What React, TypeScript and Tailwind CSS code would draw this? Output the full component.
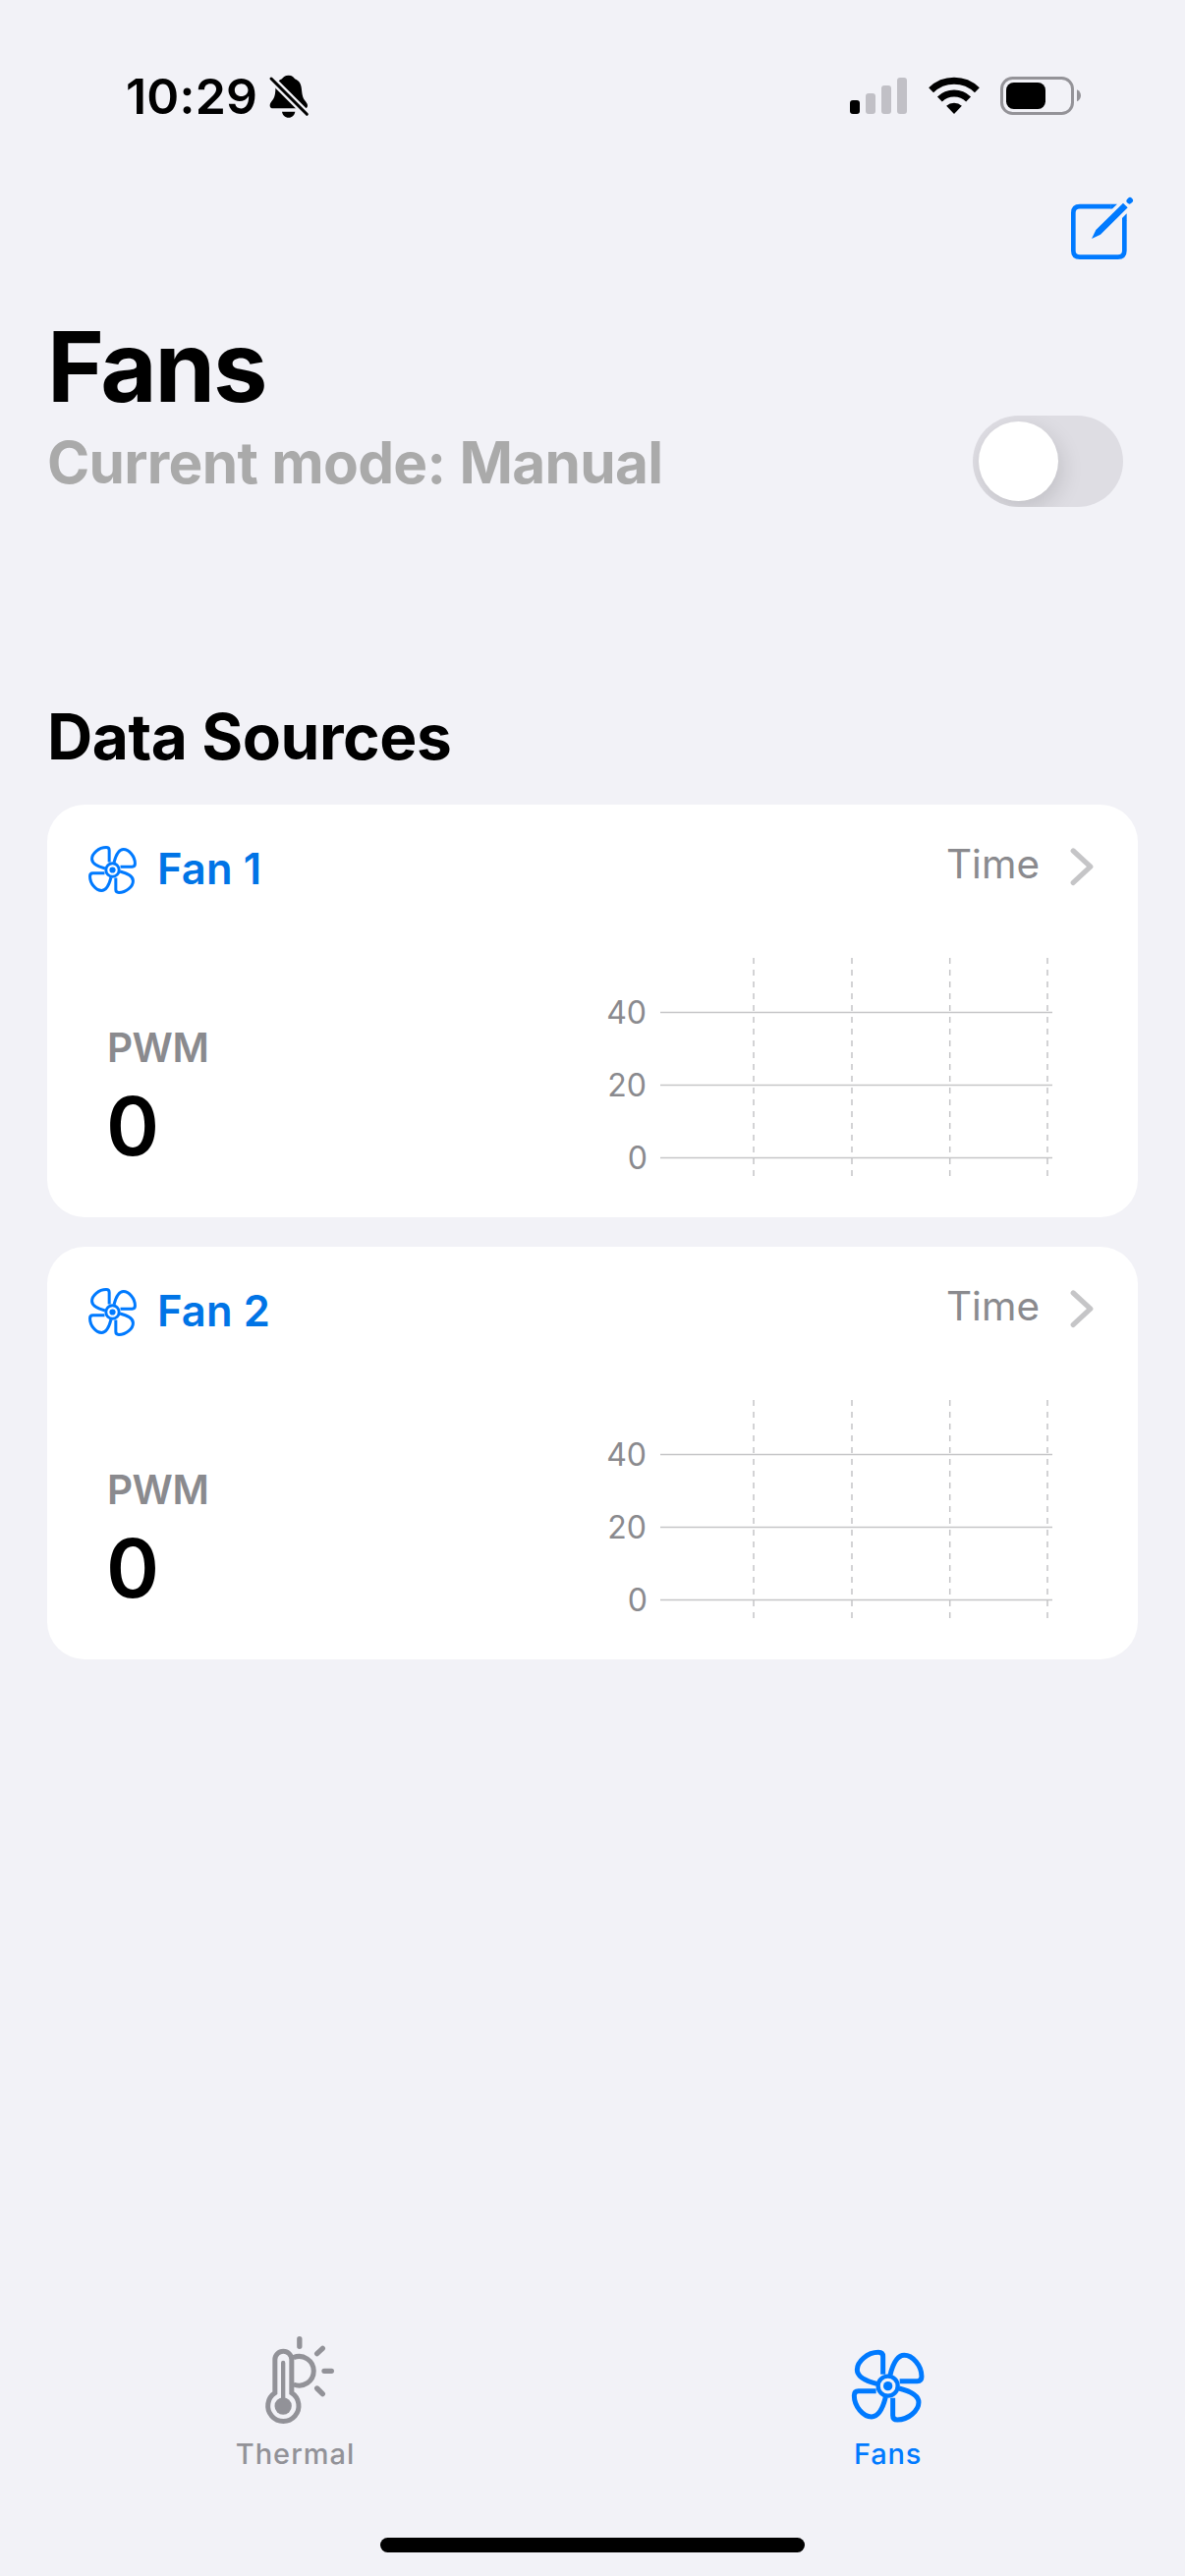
const BLADE = "M176 142V88Q176 75 162 75C128 75 97 103 97 128C97 150 125 163 157 171";

function FanIcon({ className, stroke }: { className: string; stroke: number }) {
  return (
    <svg viewBox="81 68 220 220" className={`overflow-visible ${className}`} fill="none" stroke="currentColor">
      {[0, 90, 180, 270].map((angle) => (
        <path key={angle} d={BLADE} strokeWidth={stroke} transform={`rotate(${angle} 191 178)`} />
      ))}
      <circle cx="191" cy="178" r="30" strokeWidth="13" />
      <circle cx="191" cy="178" r="14" fill="currentColor" stroke="none" />
    </svg>
  );
}

function BellSlashIcon() {
  return (
    <svg viewBox="490 46 126 136" className="h-[45.3px] w-[42px] overflow-visible">
      <path
        d="M552 51C541 51 534 57 532 62C518 68 512 80 512 95C511 115 508 121 500 131C496 136 495 140 495 144C495 149 499 152 505 152H600C606 152 610 149 610 144C610 140 608 136 604 131C596 121 594 115 592 95C591 78 585 68 571 62C569 57 563 51 552 51Z"
        fill="#000"
      />
      <path d="M532 162H572C570 173 563 180 552 180C541 180 534 173 532 162Z" fill="#000" />
      <path d="M490 52L618 180" stroke="#f2f2f7" strokeWidth="23" />
      <path d="M499 61L608 170" stroke="#000" strokeWidth="9" strokeLinecap="round" />
    </svg>
  );
}

function SignalIcon() {
  return (
    <svg viewBox="0 0 174 111" className="h-[37px] w-[58px]" fill="#c1c0c6">
      <rect x="0" y="69" width="30" height="42" rx="9" fill="#000" />
      <rect x="48" y="48" width="30" height="63" rx="9" />
      <rect x="96" y="24" width="30" height="87" rx="9" />
      <rect x="144" y="0" width="30" height="111" rx="9" />
    </svg>
  );
}

function WifiIcon() {
  return (
    <svg viewBox="286 57 150 111" className="h-[37px] w-[50px] overflow-visible" fill="none" stroke="#000" strokeWidth="21">
      <path d="M290.8 95.4A101 101 0 0 1 431.2 95.4" />
      <path d="M317.2 122.7A63 63 0 0 1 404.8 122.7" />
      <path d="M361 168L337.4 143.6A34.5 34.5 0 0 1 384.6 143.6Z" fill="#000" stroke="none" />
    </svg>
  );
}

function BatteryIcon() {
  return (
    <svg viewBox="504 54 246 117" className="h-[39px] w-[82px]">
      <rect x="508.500" y="58.500" width="216" height="108" rx="33" fill="none" stroke="#949398" strokeWidth="9" />
      <rect x="522" y="72" width="120" height="81" rx="23" fill="#000" />
      <path d="M738 94C746 97 750 105 750 112C750 119 746 127 738 130Z" fill="#949398" />
    </svg>
  );
}

function ComposeIcon() {
  return (
    <svg viewBox="90 63 189 189" className="size-[63px] overflow-visible" fill="none" stroke="#007aff">
      <path d="M212 90.500H117Q97 90.500 97 110V226Q97 245 117 245H233Q253 245 253 226V134" strokeWidth="14" />
      <path d="M211 83.500H231L216 97.500H211ZM260 112V135H246V126Z" fill="#007aff" stroke="none" />
      <path d="M249 80L263 94L180 176L153 189L166 162Z" fill="#007aff" stroke="none" />
      <path d="M268.500 73.500L270 72" strokeWidth="18" strokeLinecap="round" />
    </svg>
  );
}

function ThermalIcon() {
  return (
    <svg viewBox="150 84 210 267" className="h-[89px] w-[70px] overflow-visible" fill="none" stroke="currentColor" strokeWidth="15">
      <path d="M179.500 257V155A25.500 25.500 0 0 1 230.500 155V257A47 47 0 1 1 179.500 257Z" />
      <path d="M204.500 165V297" strokeWidth="13" strokeLinecap="round" />
      <circle cx="204.500" cy="297" r="26" fill="currentColor" stroke="none" />
      <path d="M236 149A44.500 44.500 0 1 1 236 231" />
      <path
        d="M254.500 92V115M325 121L308 137M330 190H352M308 243L325 260"
        strokeWidth="16"
        strokeLinecap="round"
      />
    </svg>
  );
}

const GRID_X = [767, 867, 966.7, 1066];
const GRID_Y = [1030.4, 1104.4, 1178.4];

function Chart() {
  return (
    <div className="flex">
      <div className="mt-[19px] flex w-[60px] flex-col text-right text-[32px] leading-[74px] text-[#8a8a8e]">
        <span>40</span>
        <span>20</span>
        <span className="-mr-px">0</span>
      </div>
      <svg viewBox="672 975 399 222" className="ml-3.5 h-[222px] w-[399px]" stroke="#c5c5c7" strokeWidth="1.5">
        {GRID_X.map((x) => (
          <path key={x} d={`M${x} 975V1197`} strokeDasharray="6 6" />
        ))}
        {GRID_Y.map((y) => (
          <path key={y} d={`M672 ${y}H1071`} />
        ))}
      </svg>
    </div>
  );
}

function FanCard({ name }: { name: string }) {
  return (
    <section className="flex h-[420px] flex-col rounded-[38px] bg-white">
      <header className="flex items-start pt-[42px] pr-[45px] pl-[42px]">
        <FanIcon className="size-[49px] text-[#007aff]" stroke={13.5} />
        <h3 className="ml-[21px] text-[43.5px] leading-[46px] font-semibold tracking-[0.1px] text-[#0074e6]">{name}</h3>
        <span className="ml-auto text-[40.5px] leading-[37px] text-[#8a8a8e]">Time</span>
        <svg viewBox="446 188 71 115" className="mt-0.5 ml-[31px] h-[38px] w-6 overflow-visible" fill="none">
          <path d="M455 197L508 246L455 295" stroke="#c5c5c7" strokeWidth="16" strokeLinecap="round" strokeLinejoin="round" />
        </svg>
      </header>
      <div className="mt-[65px] flex justify-between pr-[87px] pl-[61px]">
        <div className="mt-[67px] flex flex-col">
          <span className="text-[40.5px] leading-[50px] font-semibold tracking-[-0.5px] text-[#8a8a8e]">PWM</span>
          <span className="-ml-px text-[82px] leading-[109px] font-semibold text-black">0</span>
        </div>
        <Chart />
      </div>
    </section>
  );
}

export default function App() {
  return (
    <div className="flex h-[2622px] w-[1206px] flex-col bg-[#f2f2f7] font-['Inter',sans-serif] text-black">
      <div className="flex h-[195px] items-center pr-[106px] pl-32">
        <span className="text-[50px] leading-[60px] font-semibold tracking-[0.2px]">10:29</span>
        <div className="ml-[11px]">
          <BellSlashIcon />
        </div>
        <div className="ml-auto flex items-center">
          <SignalIcon />
          <div className="ml-[23px]">
            <WifiIcon />
          </div>
          <div className="ml-[22px]">
            <BatteryIcon />
          </div>
        </div>
      </div>

      <div className="flex h-[118px] items-start justify-end pt-[6px] pr-[53px]">
        <ComposeIcon />
      </div>

      <main className="flex flex-col px-12">
        <h1 className="text-[99px] leading-[120px] font-bold tracking-[-2.2px]">Fans</h1>
        <div className="-mt-2.5 flex h-[93px] items-center justify-between pr-[15px]">
          <p className="pt-0.5 text-[58.5px] leading-[91px] font-bold tracking-[-0.7px] text-[#aaaaaa] [word-spacing:1px]">
            Current mode: Manual
          </p>
          <div className="flex h-[93px] w-[153px] items-center overflow-hidden rounded-full bg-[#dedde3] pl-1.5">
            <div className="size-[81px] rounded-full bg-white shadow-[4px_8px_22px_rgba(0,0,0,0.13)]" />
          </div>
        </div>
        <h2 className="mt-[194px] text-[64px] leading-[80px] font-bold tracking-[-0.43px]">Data Sources</h2>
        <div className="mt-[29px] flex flex-col gap-[30px]">
          <FanCard name="Fan 1" />
          <FanCard name="Fan 2" />
        </div>
      </main>

      <nav className="mt-auto flex h-[245px] text-[29px] leading-[40px] font-medium">
        <div className="flex flex-1 flex-col items-center pr-0.5 text-[#929298]">
          <div className="flex h-[101px] items-start pt-px pl-[9px]">
            <ThermalIcon />
          </div>
          <span className="tracking-[1px]">Thermal</span>
        </div>
        <div className="flex flex-1 flex-col items-center pr-0.5 text-[#007aff]">
          <div className="flex h-[101px] items-start pt-[15px]">
            <FanIcon className="size-[73.3px]" stroke={15} />
          </div>
          <span className="tracking-[0.8px]">Fans</span>
        </div>
      </nav>
      <div className="-mt-[39px] mb-6 h-[15px] w-[432px] self-center rounded-full bg-black" />
    </div>
  );
}
